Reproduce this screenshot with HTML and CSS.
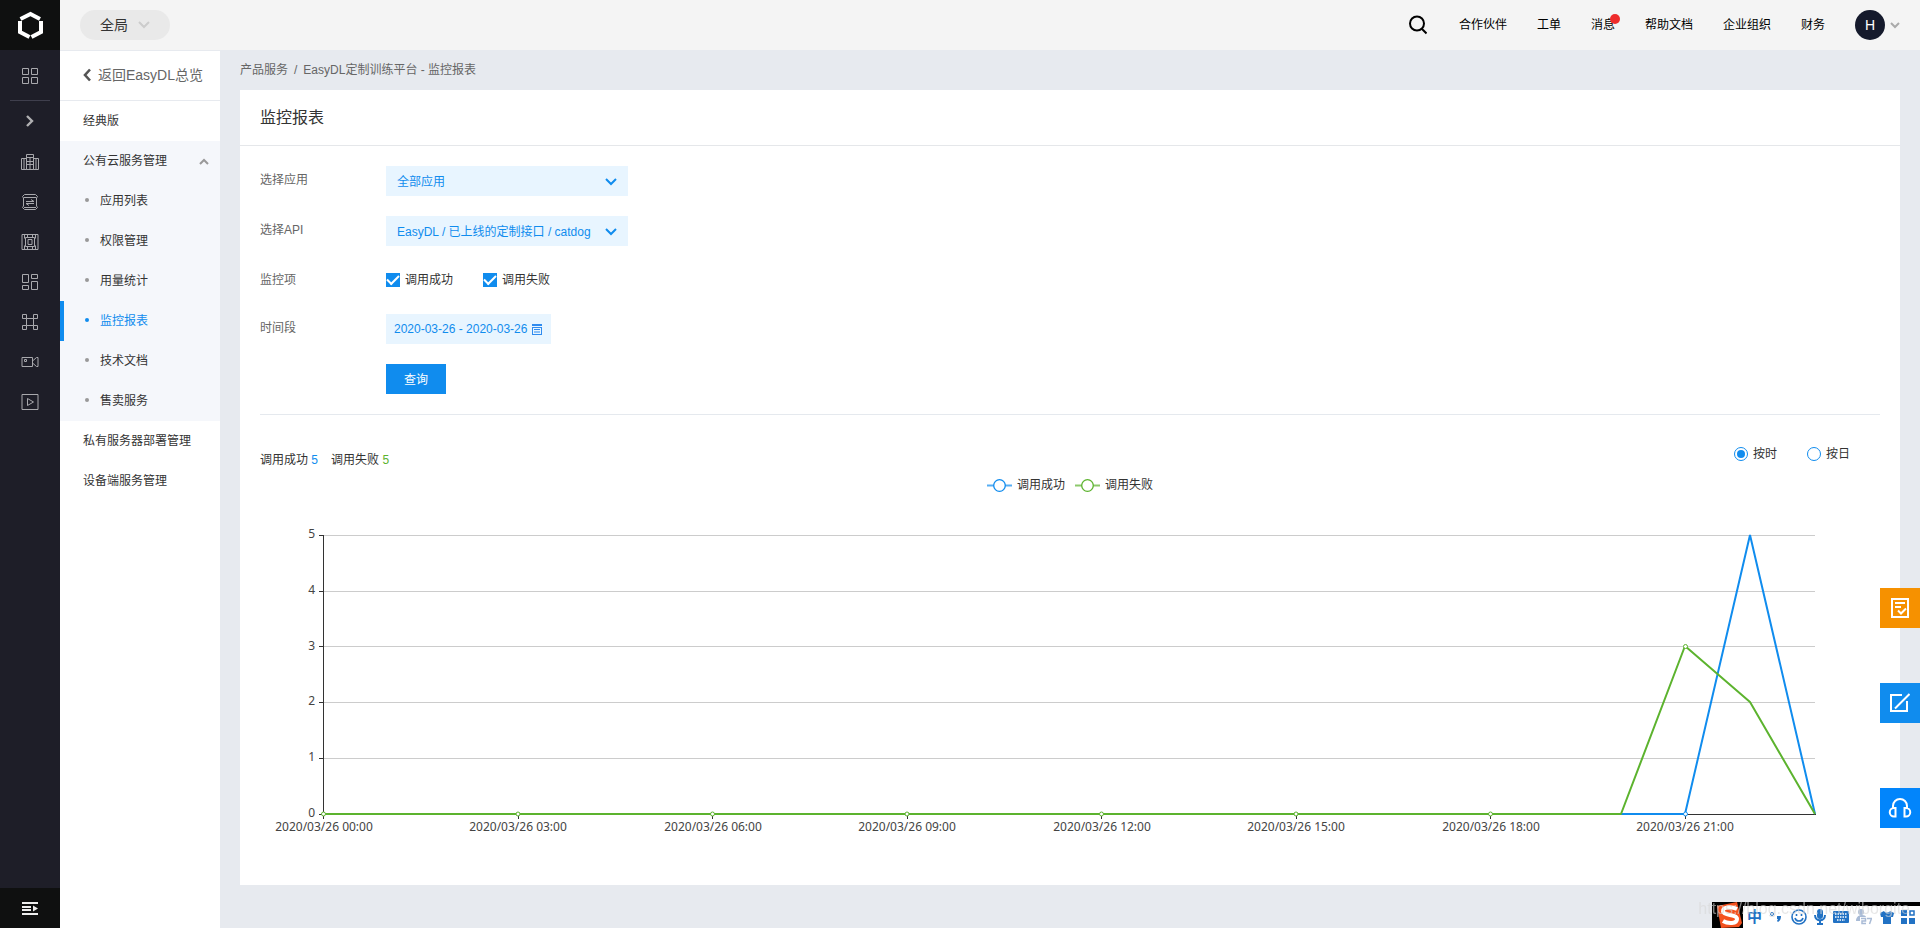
FILE: index.html
```html
<!DOCTYPE html>
<html lang="zh-CN">
<head>
<meta charset="utf-8">
<meta name="viewport" content="width=device-width, initial-scale=1">
<title>监控报表</title>
<link rel="stylesheet" href="styles.css">
</head>
<body>
<div class="app">
  <nav class="rail" aria-label="产品导航">
    <a class="rail-logo" href="#" aria-label="首页">
      <svg width="26" height="28" viewBox="0 0 26 28" fill="none" stroke="#fff" stroke-width="4"><path d="M3.500 8 13.500 3l9.500 5"/><path d="M3 10v11l9.500 5M24 10v11l-9.500 5"/></svg>
    </a>
    <a class="rail-item" href="#" aria-label="总览"><svg class="ico" viewBox="0 0 18 16"><path d="M1.500.5h6v6h-6zM10.500.5h6v6h-6zM1.500 9.500h6v6h-6zM10.500 9.500h6v6h-6z"/></svg></a>
    <hr class="rail-line">
    <button class="rail-item" type="button" aria-label="展开"><svg width="10" height="12" viewBox="0 0 10 12" fill="none" stroke="#b0b0b2" stroke-width="2.400"><path d="m2 1 5 5-5 5"/></svg></button>
    <a class="rail-item" href="#" aria-label="企业"><svg class="ico" viewBox="0 0 18 16"><path d="M.5 4.500h5v11h-5zM12.500 4.500h5v11h-5zM5.500 15.500v-12h7v12zM5.500.5h7v3h-7zM9 3.500v12M3 5v10M15 5v10M6 7.500h6M6 10.500h6"/></svg></a>
    <a class="rail-item" href="#" aria-label="数据"><svg class="ico" viewBox="0 0 18 16"><path d="M3.500.5h11l2 2-1 1.500v8l1 1.500-2 2h-11l-2-2 1-1.500V4l-1-1.500zM3 3.500h12M3 13.500h12M5 7.500h8l-3-2M13 9.500H5l3 2"/></svg></a>
    <a class="rail-item" href="#" aria-label="芯片"><svg class="ico" viewBox="0 0 18 16"><path d="M1 .5h16v15H1zM4.500 3.500h9v9h-9zM7 5.500h4v5H7zM3.500.5v4M14.500.5v4M3.500 11.500v4M14.500 11.500v4M6.500.5v3M11.500.5v3M6.500 12.500v3M11.500 12.500v3"/></svg></a>
    <a class="rail-item" href="#" aria-label="应用"><svg class="ico" viewBox="0 0 18 16"><path d="M1.500.5h6v8h-6zM10.500.5h6v4h-6zM1.500 11.500h6v4h-6zM10.500 7.500h6v8h-6z"/></svg></a>
    <a class="rail-item" href="#" aria-label="网络"><svg class="ico" viewBox="0 0 18 16"><path d="M1.500.5h4v4h-4zM12.500.5h4v4h-4zM1.500 11.500h4v4h-4zM12.500 11.500h4v4h-4zM5.500 4.500v7M12.500 4.500v7M5.500 4.500h7M5.500 11.500h7"/></svg></a>
    <a class="rail-item" href="#" aria-label="视频"><svg class="ico" viewBox="0 0 18 16"><path d="M1 3.500h10.500v9H1zM11.500 7l4-3.500h1.500v9h-1.500L11.500 9zM3.500 5.500h2v2h-2z"/></svg></a>
    <a class="rail-item" href="#" aria-label="播放"><svg class="ico" viewBox="0 0 18 16"><path d="M1 .5h16v15H1zM6.500 4.500v7l6-3.500z"/></svg></a>
    <button class="rail-toggle" type="button" aria-label="展开菜单"><svg width="16" height="13" viewBox="0 0 16 13" fill="#eee"><path d="M0 0h16v2H0zM0 4h9v2H0zM0 7h9v2H0zM0 11h16v2H0zM11 3.500v6l5-3z"/></svg></button>
  </nav>

  <div class="page">
    <header class="topbar">
      <button class="scope" type="button">全局
        <svg width="12" height="8" viewBox="0 0 12 8" fill="none" stroke="#ccc" stroke-width="2"><path d="m1 1 5 5 5-5"/></svg>
      </button>
      <button class="search" type="button" aria-label="搜索"><svg width="18" height="20" viewBox="0 0 18 20" fill="none" stroke="#000" stroke-width="2"><circle cx="8" cy="8.500" r="7"/><path d="m12.500 13.500 5 5"/></svg></button>
      <nav class="toplinks" aria-label="顶部导航">
        <a href="#">合作伙伴</a><a href="#">工单</a><a class="has-dot" href="#">消息</a><a href="#">帮助文档</a><a href="#">企业组织</a><a href="#">财务</a>
      </nav>
      <button class="user" type="button"><span class="avatar">H</span>
        <svg width="10" height="7" viewBox="0 0 10 7" fill="none" stroke="#aaa" stroke-width="2"><path d="m1 1 4 4 4-4"/></svg>
      </button>
    </header>

    <div class="body">
      <aside class="side">
        <a class="side-back" href="#"><svg width="8" height="14" viewBox="0 0 8 14" fill="none" stroke="#555" stroke-width="2.600"><path d="M7 1.500 2 7l5 5.500"/></svg>返回EasyDL总览</a>
        <a class="side-item" href="#">经典版</a>
        <div class="group">
          <button class="side-item" type="button">公有云服务管理
            <svg width="10" height="7" viewBox="0 0 10 7" fill="none" stroke="#999" stroke-width="2"><path d="m1 6 4-4 4 4"/></svg>
          </button>
          <a class="side-item sub" href="#">应用列表</a>
          <a class="side-item sub" href="#">权限管理</a>
          <a class="side-item sub" href="#">用量统计</a>
          <a class="side-item sub active" href="#">监控报表</a>
          <a class="side-item sub" href="#">技术文档</a>
          <a class="side-item sub" href="#">售卖服务</a>
        </div>
        <a class="side-item" href="#">私有服务器部署管理</a>
        <a class="side-item" href="#">设备端服务管理</a>
      </aside>

      <main class="main">
        <div class="crumbs"><a href="#">产品服务</a><span>/</span>EasyDL定制训练平台 - 监控报表</div>
        <section class="card">
          <h1 class="card-title">监控报表</h1>
          <div class="card-body">
            <form class="form">
              <label class="label" for="app">选择应用</label>
              <div class="select"><select id="app"><option>全部应用</option></select><svg class="caret" viewBox="0 0 12 8"><path d="m1 1 5 5 5-5"/></svg></div>
              <label class="label" for="api">选择API</label>
              <div class="select"><select id="api"><option>EasyDL / 已上线的定制接口 / catdog</option></select><svg class="caret" viewBox="0 0 12 8"><path d="m1 1 5 5 5-5"/></svg></div>
              <span class="label">监控项</span>
              <div class="checks">
                <label class="opt"><input class="check" type="checkbox" checked>调用成功</label>
                <label class="opt"><input class="check" type="checkbox" checked>调用失败</label>
              </div>
              <label class="label" for="range">时间段</label>
              <button class="range" id="range" type="button">2020-03-26 - 2020-03-26
                <svg width="10" height="11" viewBox="0 0 10 11"><path d="M0 0h10v2H0zM0 3h10v8H0z" fill="#2f8bef"/><path d="M1 4h8v6H1z" fill="#e8f5ff"/><path d="M2 5.500h6M2 8h6" stroke="#2f8bef"/></svg>
              </button>
              <button class="submit" type="button">查询</button>
            </form>
            <div class="summary">
              <p class="totals"><span>调用成功 <b class="blue">5</b></span><span>调用失败 <b class="green">5</b></span></p>
              <div class="modes">
                <label class="opt"><input class="radio" type="radio" name="mode" checked>按时</label>
                <label class="opt"><input class="radio" type="radio" name="mode">按日</label>
              </div>
            </div>
            <div class="legend">
              <span class="key"><svg width="25" height="14" viewBox="0 0 25 14" fill="#fff" stroke="#108cee"><path d="M0 7.500h25" stroke-width="2" opacity=".7"/><circle cx="12.500" cy="7.500" r="5.800" stroke-width="1.300"/></svg>调用成功</span>
              <span class="key"><svg width="25" height="14" viewBox="0 0 25 14" fill="#fff" stroke="#5cb32e"><path d="M0 7.500h25" stroke-width="2" opacity=".7"/><circle cx="12.500" cy="7.500" r="5.800" stroke-width="1.300"/></svg>调用失败</span>
            </div>
            <svg class="chart" viewBox="0 0 1620 350" role="img" aria-label="调用量趋势">
              <path class="grid" d="M64 40.500H1555M64 96.500H1555M64 151.500H1555M64 207.500H1555M64 263.500H1555"/>
              <path class="axis" d="M63.500 40V320M59 40.500h5M59 96.500h5M59 151.500h5M59 207.500h5M59 263.500h5M59 319.500H1556M63.500 319v5M258.500 319v5M452.500 319v5M647.500 319v5M841.500 319v5M1036.500 319v5M1230.500 319v5M1425.500 319v5"/>
              <polyline class="line line-blue" points="63,319 1425,319 1490,40 1555,319"/>
              <polyline class="line line-green" points="63,319 1361,319 1425,151 1490,207 1555,319"/>
              <g class="dot dot-green"><circle cx="63.500" cy="319" r="2"/><circle cx="258" cy="319" r="2"/><circle cx="452.500" cy="319" r="2"/><circle cx="647" cy="319" r="2"/><circle cx="841.500" cy="319" r="2"/><circle cx="1036" cy="319" r="2"/><circle cx="1230.500" cy="319" r="2"/><circle cx="1425.500" cy="151.500" r="2"/></g>
              <circle class="dot dot-blue" cx="1425.500" cy="319" r="2"/>
              <g class="ylab"><text x="55" y="43">5</text><text x="55" y="99">4</text><text x="55" y="155">3</text><text x="55" y="210">2</text><text x="55" y="266">1</text><text x="55" y="322">0</text></g>
              <g class="xlab"><text x="64" y="336">2020/03/26 00:00</text><text x="258" y="336">2020/03/26 03:00</text><text x="453" y="336">2020/03/26 06:00</text><text x="647" y="336">2020/03/26 09:00</text><text x="842" y="336">2020/03/26 12:00</text><text x="1036" y="336">2020/03/26 15:00</text><text x="1231" y="336">2020/03/26 18:00</text><text x="1425" y="336">2020/03/26 21:00</text></g>
            </svg>
          </div>
        </section>
      </main>
    </div>
  </div>
</div>

<div class="floats">
  <button class="float orange" type="button" aria-label="问卷"><svg width="18" height="20" viewBox="0 0 18 20" fill="none" stroke="#fff" stroke-width="2"><path d="M1 1h16v18H1zM4 5h10M4 9h6M7 12.500l3 3 5-5"/></svg></button>
  <button class="float blue-bg" type="button" aria-label="反馈"><svg width="20" height="20" viewBox="0 0 20 20" fill="none" stroke="#fff" stroke-width="2"><path d="M12 2H1v16h16V8M5 15.500 19.500 1"/></svg></button>
  <button class="float bright" type="button" aria-label="客服"><svg width="24" height="20" viewBox="0 0 24 20" fill="none" stroke="#fff" stroke-width="2"><path d="M5 10V8a7 7 0 0 1 14 0v2M7.500 10v8.500H6a4.200 4.200 0 0 1 0-8.500zM16.500 10v8.500H18a4.200 4.200 0 0 0 0-8.500z"/></svg></button>
</div>

<div class="ime">
  <svg width="27" height="26" viewBox="0 0 27 26"><path d="M1 4 21 0l5 21-3 4-18 1z" fill="#f4511e"/><path d="M21 7C15 4 6 5 7 9.500s14 2.500 14 7.500-9 5-14 2" fill="none" stroke="#fff" stroke-width="4"/></svg>
  <div class="ime-bar">
    <span class="ime-zh">中</span>
    <svg width="14" height="16" viewBox="0 0 14 16"><circle cx="3" cy="5" r="1.500" fill="none" stroke="#2272c4"/><path d="M8 7h4c0 3-1 5-3 6l-1-1 1-2H8z" fill="#2272c4"/></svg>
    <svg width="16" height="16" viewBox="0 0 16 16" fill="none" stroke="#2272c4" stroke-width="1.600"><circle cx="8" cy="8" r="7"/><path d="M5.500 5v2M10.500 5v2M4 9c1 4 7 4 8 0"/></svg>
    <svg width="12" height="16" viewBox="0 0 12 16" fill="none" stroke="#2272c4" stroke-width="2"><rect x="4" y="1" width="4" height="8" rx="2" fill="#2272c4"/><path d="M1 6c0 7 10 7 10 0M6 11v4M3 15h6"/></svg>
    <svg width="16" height="12" viewBox="0 0 16 12"><rect width="16" height="12" rx="1" fill="#2272c4"/><path d="M2 3h12M2 6h12M4 9h8" stroke="#fff" stroke-width="1.500" stroke-dasharray="1.500 1"/></svg>
    <svg width="16" height="16" viewBox="0 0 16 16" fill="#a9bbd6"><circle cx="5" cy="3" r="3"/><path d="M0 12c0-7 9-7 10-4H4v4z"/><path d="M5 9.500h4.500V12H6v2.500h4M11 9.500h4.500l-2 5.500" fill="none" stroke="#a9bbd6" stroke-width="1.500"/></svg>
    <svg width="14" height="14" viewBox="0 0 14 14" fill="#2272c4"><path d="M4 1c1 2 5 2 6 0l4 2-1 4h-2v7H3V7H1L0 3z"/></svg>
    <svg width="14" height="14" viewBox="0 0 14 14" fill="#2272c4"><path d="M0 0h6v6H0zM0 8h6v6H0zM8 8h6v6H8z"/><path d="M9 1h4v4H9z" fill="none" stroke="#2272c4" stroke-width="1.500"/></svg>
  </div>
</div>
<div class="watermark">https://blog.csdn.net/wiborgite</div>
</body>
</html>
```
FILE: styles.css
```css
* { box-sizing: border-box; }
body {
  margin: 0;
  background: #e7eaef;
  color: #333;
  font: 12px/20px "Liberation Sans", "Noto Sans CJK SC", sans-serif;
}
a { color: inherit; text-decoration: none; }
button, select, input { font: inherit; color: inherit; margin: 0; }
button { border: 0; padding: 0; background: none; cursor: pointer; }
svg { display: block; flex: none; }

.app { display: flex; min-height: 100vh; }

/* icon rail */
.rail {
  display: flex;
  flex-direction: column;
  flex: none;
  width: 60px;
  background: #1e1e28;
}
.rail-logo, .rail-item, .rail-toggle { display: flex; align-items: center; justify-content: center; }
.rail-logo { height: 50px; margin-bottom: 1px; background: #0f1010; }
.rail-item { height: 40px; }
.rail-logo + .rail-item { height: 49px; }
.rail-line { width: 40px; height: 1px; margin: 0 auto; border: 0; background: #3f3f4d; }
.rail-line + .rail-item { margin-bottom: 1px; }
.rail-toggle { height: 40px; margin-top: auto; background: #0f1010; }
.ico { width: 18px; height: 16px; fill: none; stroke: #a9a9ad; }

/* top bar */
.page { display: flex; flex-direction: column; flex: 1; min-width: 0; }
.topbar {
  display: flex;
  align-items: center;
  height: 50px;
  padding: 0 20px;
  background: #f4f4f4;
}
.scope {
  display: flex;
  align-items: center;
  gap: 10px;
  height: 30px;
  padding: 0 20px;
  border-radius: 15px;
  background: #e9e9e9;
  font-size: 14px;
}
.search { margin-left: auto; margin-right: 32px; }
.toplinks { display: flex; gap: 30px; color: #000; }
.has-dot { position: relative; }
.has-dot::after {
  content: "";
  position: absolute;
  top: -1px;
  right: -5px;
  width: 10px;
  height: 10px;
  border-radius: 50%;
  background: #ee2c2c;
}
.user { display: flex; align-items: center; gap: 5px; margin-left: 30px; }
.avatar {
  width: 30px;
  height: 30px;
  border-radius: 50%;
  background: #151a2c;
  color: #fff;
  font-size: 14px;
  line-height: 30px;
  text-align: center;
}

/* side menu */
.body { display: flex; flex: 1; }
.side { flex: none; width: 160px; margin-top: 1px; background: #fff; }
.side-back {
  display: flex;
  align-items: center;
  gap: 7px;
  height: 50px;
  padding: 0 0 2px 23px;
  border-bottom: 1px solid #e7eaef;
  color: #666;
  font-size: 14px;
}
.side-item {
  position: relative;
  display: flex;
  align-items: center;
  justify-content: space-between;
  width: 100%;
  height: 40px;
  padding: 0 11px 0 23px;
}
.group { background: #f5f7fb; }
.sub { padding-left: 40px; }
.sub::before {
  content: "";
  position: absolute;
  top: 17px;
  left: 25px;
  width: 4px;
  height: 4px;
  border-radius: 50%;
  background: #999;
}
.active { border-left: 4px solid #108cee; padding-left: 36px; color: #108cee; }
.active::before { left: 21px; background: #108cee; }

/* content */
.main { flex: 1; min-width: 0; padding: 0 20px 43px; }
.crumbs { padding: 10px 0; color: #666; }
.crumbs span { margin: 0 6px; }
.card { background: #fff; }
.card-title {
  margin: 0;
  padding: 16px 20px 15px;
  border-bottom: 1px solid #e5e7ea;
  font-size: 16px;
  font-weight: 400;
  line-height: 24px;
}
.card-body { padding: 20px 20px 40px; }
.form {
  display: grid;
  grid-template-columns: 126px 1fr;
  row-gap: 20px;
  justify-items: start;
  padding-bottom: 20px;
  border-bottom: 1px solid #e5e9ee;
}
.label { line-height: 28px; color: #666; }
.select { position: relative; width: 242px; }
.select select {
  display: block;
  width: 100%;
  height: 30px;
  padding: 2px 30px 0 11px;
  border: 0;
  border-radius: 0;
  background: #e8f5ff;
  color: #108cee;
  appearance: none;
}
.caret {
  position: absolute;
  top: 12px;
  right: 11px;
  width: 12px;
  height: 8px;
  fill: none;
  stroke: #108cee;
  stroke-width: 2;
  pointer-events: none;
}
.checks, .modes { display: flex; gap: 30px; }
.opt { display: flex; align-items: center; gap: 5px; }
.checks { height: 28px; }
.check, .radio { display: grid; place-items: center; width: 14px; height: 14px; appearance: none; }
.check { background: #fff; border: 1px solid #108cee; }
.check:checked { background: #108cee; }
.check:checked::before {
  content: "";
  width: 10px;
  height: 5px;
  margin-bottom: 3px;
  border: solid #fff;
  border-width: 0 0 2px 2px;
  transform: rotate(-45deg);
}
.radio { border: 1px solid #108cee; border-radius: 50%; }
.radio:checked::before { content: ""; width: 8px; height: 8px; border-radius: 50%; background: #108cee; }
.range {
  display: flex;
  align-items: center;
  gap: 5px;
  height: 30px;
  padding: 0 9px 0 8px;
  background: #e8f5ff;
  color: #108cee;
}
.submit { grid-column: 2; width: 60px; height: 30px; padding-top: 2px; background: #108cee; color: #fff; }

.summary { display: flex; justify-content: space-between; height: 27px; margin-top: 29px; padding-right: 30px; }
.modes { align-self: flex-start; }
.totals { display: flex; align-self: flex-end; gap: 13px; margin: 0; line-height: 22px; }
.totals b { font-weight: 400; }
.blue { color: #108cee; }
.green { color: #5cb32e; }
.legend { display: flex; justify-content: center; gap: 10px; margin-top: 4px; }
.key { display: flex; align-items: center; gap: 5px; }

.chart { width: 100%; height: auto; font: 12px "Noto Sans", sans-serif; fill: #444; }
.grid { fill: none; stroke: #ccc; shape-rendering: crispEdges; }
.axis { fill: none; stroke: #333; shape-rendering: crispEdges; }
.line { fill: none; stroke-width: 2; stroke-linejoin: bevel; }
.line-blue, .dot-blue { stroke: #108cee; }
.line-green, .dot-green { stroke: #5cb32e; }
.dot { fill: #fff; }
.ylab { text-anchor: end; }
.xlab { text-anchor: middle; }

/* floating shortcuts */
.floats { position: fixed; top: 588px; right: 0; }
.float { display: flex; align-items: center; justify-content: center; width: 40px; height: 40px; }
.orange { background: #f69100; }
.blue-bg { margin: 55px 0 65px; background: #108cee; }
.bright { background: #0285fb; }

/* input method bar */
.ime {
  position: fixed;
  right: 0;
  bottom: 0;
  display: flex;
  align-items: flex-end;
  width: 208px;
  height: 26px;
  padding-left: 4px;
  background: #000;
}
.ime-bar {
  display: flex;
  align-items: center;
  justify-content: space-between;
  flex: 1;
  height: 22px;
  padding: 0 5px 0 4px;
  background: #fff;
}
.ime-zh { color: #2272c4; font-size: 15px; font-weight: 700; }
.watermark {
  position: fixed;
  right: 10px;
  bottom: 9px;
  color: rgba(215, 215, 215, 0.6);
  font-size: 16px;
  pointer-events: none;
}
```
